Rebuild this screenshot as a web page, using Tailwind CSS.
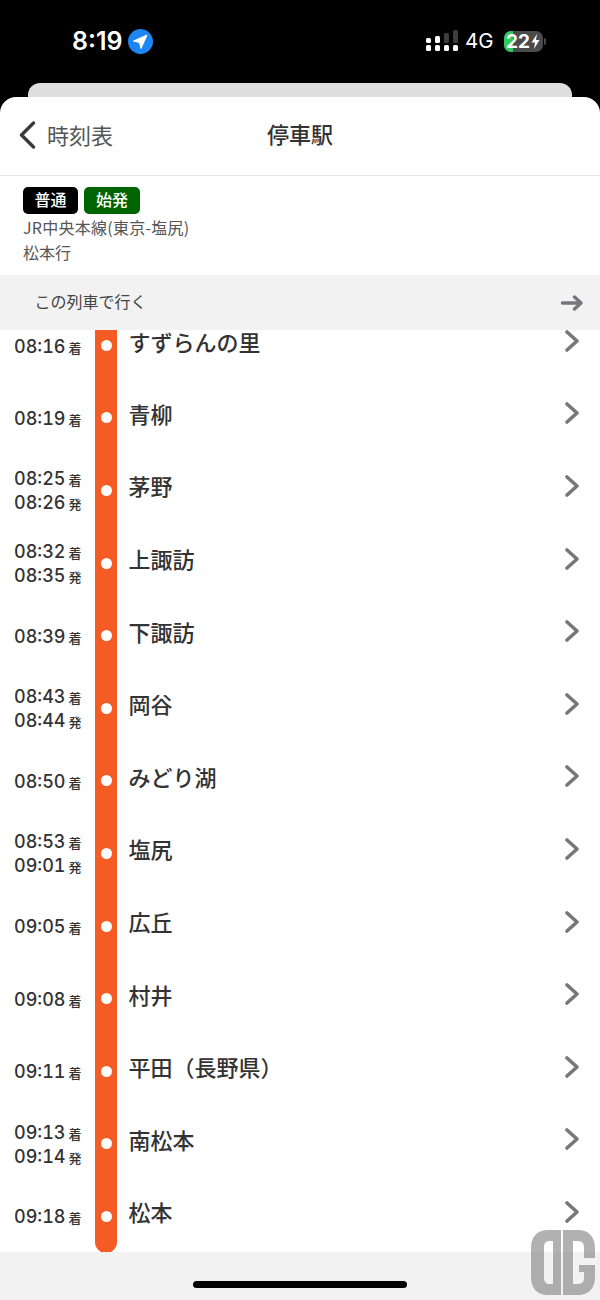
<!DOCTYPE html>
<html lang="ja">
<head>
    <meta charset="UTF-8">
    <meta name="viewport" content="width=device-width, initial-scale=1.0">
    <title>停車駅</title>
    <script src="https://cdn.jsdelivr.net/npm/@tailwindcss/browser@4"></script>
</head>
<body class="bg-black font-['Noto_Sans_CJK_JP','Noto_Sans',sans-serif]">
<svg class="hidden">
    <symbol id="chev" viewBox="0 0 14 22"><path d="M2 2 L12 11 L2 20" fill="none" stroke="#77777b" stroke-width="3.6" stroke-linecap="round" stroke-linejoin="round"/></symbol>
</svg>
<div class="relative w-[600px] h-[1300px] overflow-hidden flex flex-col">

    <!-- status bar -->
    <div class="h-[83px] shrink-0 flex items-start text-white font-['Inter',sans-serif]">
        <div class="flex items-center h-[24px] mt-[29px] ml-[72px]">
            <span class="text-[25px] font-semibold leading-none w-[56px]">8:19</span>
            <svg width="25" height="25" viewBox="0 0 25 25"><circle cx="12.5" cy="12.5" r="12.5" fill="#1c86f2"/><path d="M19 6 L5.5 12 L11.5 13.5 L13 19.5 Z" fill="#fff" stroke="#fff" stroke-width="1" stroke-linejoin="round"/></svg>
        </div>
        <div class="flex items-center h-[24px] mt-[29px] ml-auto mr-[54px]">
            <svg width="32" height="22" viewBox="0 0 32 22"><g fill="#fff"><rect x="0" y="15" width="5" height="6" rx="1.5"/><rect x="9" y="15" width="5" height="6" rx="1.5"/><rect x="18" y="15" width="5" height="6" rx="1.5"/><rect x="27" y="15" width="5" height="6" rx="1.5"/><rect x="0" y="8" width="5" height="5" rx="1.5"/><rect x="9" y="6" width="5" height="7" rx="1.5"/></g><g fill="#3d3d3d"><rect x="18" y="3" width="5" height="10" rx="1.5"/><rect x="27" y="0" width="5" height="13" rx="1.5"/></g></svg>
            <span class="text-[20.5px] leading-none ml-[7px] w-[39px]">4G</span>
            <div class="relative w-[39px] h-[21px] rounded-[7px] overflow-hidden bg-[#4b4b4b] flex items-center pl-[2px]">
                <div class="absolute left-0 top-0 bottom-0 w-[9px] bg-[#34c759]"></div>
                <span class="relative text-[19px] font-bold leading-none">22</span>
                <svg class="relative ml-[1px]" width="9" height="15" viewBox="0 0 9 15"><path d="M6 0 L0.5 8.5 H4 L3 15 L8.5 6 H5 Z" fill="#fff"/></svg>
            </div>
            <div class="w-[2px] h-[7px] ml-[1px] rounded-r-sm bg-[#4b4b4b]"></div>
        </div>
    </div>
    <div class="h-[14px] shrink-0 mx-[28px] rounded-t-xl bg-[#dfdfdf]"></div>

    <!-- sheet -->
    <div class="flex-1 min-h-0 flex flex-col bg-white rounded-t-2xl overflow-hidden">
        <div class="relative h-[79px] shrink-0 flex items-center justify-center border-b border-[#e6e6e6]">
            <div class="absolute left-[19px] top-[24px] flex items-center">
                <svg width="17" height="28" viewBox="0 0 17 28"><path d="M14.5 2 L2.5 14 L14.5 26" fill="none" stroke="#3a3a3a" stroke-width="3.4" stroke-linecap="round" stroke-linejoin="round"/></svg>
                <span class="ml-[11px] -mt-[3px] text-[22px] leading-none text-[#555]">時刻表</span>
            </div>
            <span class="text-[22px] font-medium leading-none text-[#333] -mt-[6px]">停車駅</span>
        </div>

        <div class="h-[99px] shrink-0 px-[23px] pt-[11px]">
            <div class="flex gap-[6px]">
                <span class="w-[55px] h-[27px] rounded-[5px] bg-black text-white text-[16px] font-medium leading-[25px] text-center">普通</span>
                <span class="w-[56px] h-[27px] rounded-[5px] bg-[#006400] text-white text-[16px] font-medium leading-[25px] text-center">始発</span>
            </div>
            <p class="mt-[1px] text-[16px] leading-[25px] tracking-[0.25px] text-[#555]">JR中央本線(東京-塩尻)</p>
            <p class="text-[16px] leading-[25px] text-[#555]">松本行</p>
        </div>

        <div class="h-[55px] shrink-0 bg-[#f2f2f2] flex items-center pl-[34.5px] pr-[17px] justify-between">
            <span class="-mt-[4px] text-[16px] leading-none text-[#444]">この列車で行く</span>
            <svg width="22" height="16" viewBox="0 0 22 16"><path d="M1.5 8 H20 M13.5 2 L20 8 L13.5 14" fill="none" stroke="#77777b" stroke-width="3.4" stroke-linecap="round" stroke-linejoin="round"/></svg>
        </div>

        <!-- stops: the list is scrolled, so the first row shows only its lower part -->
        <div class="h-[922px] shrink-0 text-[#333]">
            <div class="h-[51.6px] flex items-start">
                <div class="w-[95px] pl-[14px] pt-[5px]"><p class="h-[24px] leading-[24px] text-[18px] font-medium tabular-nums font-['Inter',sans-serif]">08:16<span class="ml-[3px] text-[13px] font-medium font-['Noto_Sans_CJK_JP']">着</span></p></div>
                <div class="w-[22px] h-full bg-[#f45c23] flex justify-center pt-[10px]"><i class="block w-[11px] h-[11px] rounded-full bg-white"></i></div>
                <p class="flex-1 pl-[11.5px] -mt-[1px] text-[22px] font-medium leading-[24px]">すずらんの里</p>
                <svg class="mr-[21px]" width="14" height="22"><use href="#chev"/></svg>
            </div>
            <div class="h-[72.6px] flex">
                <div class="w-[95px] pl-[14px] pt-[2px] flex flex-col justify-center"><p class="h-[24px] leading-[24px] text-[18px] font-medium tabular-nums font-['Inter',sans-serif]">08:19<span class="ml-[3px] text-[13px] font-medium font-['Noto_Sans_CJK_JP']">着</span></p></div>
                <div class="w-[22px] bg-[#f45c23] flex items-center justify-center"><i class="block w-[11px] h-[11px] rounded-full bg-white"></i></div>
                <p class="flex-1 pl-[11.5px] self-center -mt-[10px] text-[22px] font-medium leading-[24px]">青柳</p>
                <svg class="self-center -mt-[9px] mr-[21px]" width="14" height="22"><use href="#chev"/></svg>
            </div>
            <div class="h-[72.6px] flex">
                <div class="w-[95px] pl-[14px] pt-[2px] flex flex-col justify-center"><p class="h-[24px] leading-[24px] text-[18px] font-medium tabular-nums font-['Inter',sans-serif]">08:25<span class="ml-[3px] text-[13px] font-medium font-['Noto_Sans_CJK_JP']">着</span></p><p class="h-[24px] leading-[24px] text-[18px] font-medium tabular-nums font-['Inter',sans-serif]">08:26<span class="ml-[3px] text-[13px] font-medium font-['Noto_Sans_CJK_JP']">発</span></p></div>
                <div class="w-[22px] bg-[#f45c23] flex items-center justify-center"><i class="block w-[11px] h-[11px] rounded-full bg-white"></i></div>
                <p class="flex-1 pl-[11.5px] self-center -mt-[10px] text-[22px] font-medium leading-[24px]">茅野</p>
                <svg class="self-center -mt-[9px] mr-[21px]" width="14" height="22"><use href="#chev"/></svg>
            </div>
            <div class="h-[72.6px] flex">
                <div class="w-[95px] pl-[14px] pt-[2px] flex flex-col justify-center"><p class="h-[24px] leading-[24px] text-[18px] font-medium tabular-nums font-['Inter',sans-serif]">08:32<span class="ml-[3px] text-[13px] font-medium font-['Noto_Sans_CJK_JP']">着</span></p><p class="h-[24px] leading-[24px] text-[18px] font-medium tabular-nums font-['Inter',sans-serif]">08:35<span class="ml-[3px] text-[13px] font-medium font-['Noto_Sans_CJK_JP']">発</span></p></div>
                <div class="w-[22px] bg-[#f45c23] flex items-center justify-center"><i class="block w-[11px] h-[11px] rounded-full bg-white"></i></div>
                <p class="flex-1 pl-[11.5px] self-center -mt-[10px] text-[22px] font-medium leading-[24px]">上諏訪</p>
                <svg class="self-center -mt-[9px] mr-[21px]" width="14" height="22"><use href="#chev"/></svg>
            </div>
            <div class="h-[72.6px] flex">
                <div class="w-[95px] pl-[14px] pt-[2px] flex flex-col justify-center"><p class="h-[24px] leading-[24px] text-[18px] font-medium tabular-nums font-['Inter',sans-serif]">08:39<span class="ml-[3px] text-[13px] font-medium font-['Noto_Sans_CJK_JP']">着</span></p></div>
                <div class="w-[22px] bg-[#f45c23] flex items-center justify-center"><i class="block w-[11px] h-[11px] rounded-full bg-white"></i></div>
                <p class="flex-1 pl-[11.5px] self-center -mt-[10px] text-[22px] font-medium leading-[24px]">下諏訪</p>
                <svg class="self-center -mt-[9px] mr-[21px]" width="14" height="22"><use href="#chev"/></svg>
            </div>
            <div class="h-[72.6px] flex">
                <div class="w-[95px] pl-[14px] pt-[2px] flex flex-col justify-center"><p class="h-[24px] leading-[24px] text-[18px] font-medium tabular-nums font-['Inter',sans-serif]">08:43<span class="ml-[3px] text-[13px] font-medium font-['Noto_Sans_CJK_JP']">着</span></p><p class="h-[24px] leading-[24px] text-[18px] font-medium tabular-nums font-['Inter',sans-serif]">08:44<span class="ml-[3px] text-[13px] font-medium font-['Noto_Sans_CJK_JP']">発</span></p></div>
                <div class="w-[22px] bg-[#f45c23] flex items-center justify-center"><i class="block w-[11px] h-[11px] rounded-full bg-white"></i></div>
                <p class="flex-1 pl-[11.5px] self-center -mt-[10px] text-[22px] font-medium leading-[24px]">岡谷</p>
                <svg class="self-center -mt-[9px] mr-[21px]" width="14" height="22"><use href="#chev"/></svg>
            </div>
            <div class="h-[72.6px] flex">
                <div class="w-[95px] pl-[14px] pt-[2px] flex flex-col justify-center"><p class="h-[24px] leading-[24px] text-[18px] font-medium tabular-nums font-['Inter',sans-serif]">08:50<span class="ml-[3px] text-[13px] font-medium font-['Noto_Sans_CJK_JP']">着</span></p></div>
                <div class="w-[22px] bg-[#f45c23] flex items-center justify-center"><i class="block w-[11px] h-[11px] rounded-full bg-white"></i></div>
                <p class="flex-1 pl-[11.5px] self-center -mt-[10px] text-[22px] font-medium leading-[24px]">みどり湖</p>
                <svg class="self-center -mt-[9px] mr-[21px]" width="14" height="22"><use href="#chev"/></svg>
            </div>
            <div class="h-[72.6px] flex">
                <div class="w-[95px] pl-[14px] pt-[2px] flex flex-col justify-center"><p class="h-[24px] leading-[24px] text-[18px] font-medium tabular-nums font-['Inter',sans-serif]">08:53<span class="ml-[3px] text-[13px] font-medium font-['Noto_Sans_CJK_JP']">着</span></p><p class="h-[24px] leading-[24px] text-[18px] font-medium tabular-nums font-['Inter',sans-serif]">09:01<span class="ml-[3px] text-[13px] font-medium font-['Noto_Sans_CJK_JP']">発</span></p></div>
                <div class="w-[22px] bg-[#f45c23] flex items-center justify-center"><i class="block w-[11px] h-[11px] rounded-full bg-white"></i></div>
                <p class="flex-1 pl-[11.5px] self-center -mt-[10px] text-[22px] font-medium leading-[24px]">塩尻</p>
                <svg class="self-center -mt-[9px] mr-[21px]" width="14" height="22"><use href="#chev"/></svg>
            </div>
            <div class="h-[72.6px] flex">
                <div class="w-[95px] pl-[14px] pt-[2px] flex flex-col justify-center"><p class="h-[24px] leading-[24px] text-[18px] font-medium tabular-nums font-['Inter',sans-serif]">09:05<span class="ml-[3px] text-[13px] font-medium font-['Noto_Sans_CJK_JP']">着</span></p></div>
                <div class="w-[22px] bg-[#f45c23] flex items-center justify-center"><i class="block w-[11px] h-[11px] rounded-full bg-white"></i></div>
                <p class="flex-1 pl-[11.5px] self-center -mt-[10px] text-[22px] font-medium leading-[24px]">広丘</p>
                <svg class="self-center -mt-[9px] mr-[21px]" width="14" height="22"><use href="#chev"/></svg>
            </div>
            <div class="h-[72.6px] flex">
                <div class="w-[95px] pl-[14px] pt-[2px] flex flex-col justify-center"><p class="h-[24px] leading-[24px] text-[18px] font-medium tabular-nums font-['Inter',sans-serif]">09:08<span class="ml-[3px] text-[13px] font-medium font-['Noto_Sans_CJK_JP']">着</span></p></div>
                <div class="w-[22px] bg-[#f45c23] flex items-center justify-center"><i class="block w-[11px] h-[11px] rounded-full bg-white"></i></div>
                <p class="flex-1 pl-[11.5px] self-center -mt-[10px] text-[22px] font-medium leading-[24px]">村井</p>
                <svg class="self-center -mt-[9px] mr-[21px]" width="14" height="22"><use href="#chev"/></svg>
            </div>
            <div class="h-[72.6px] flex">
                <div class="w-[95px] pl-[14px] pt-[2px] flex flex-col justify-center"><p class="h-[24px] leading-[24px] text-[18px] font-medium tabular-nums font-['Inter',sans-serif]">09:11<span class="ml-[3px] text-[13px] font-medium font-['Noto_Sans_CJK_JP']">着</span></p></div>
                <div class="w-[22px] bg-[#f45c23] flex items-center justify-center"><i class="block w-[11px] h-[11px] rounded-full bg-white"></i></div>
                <p class="flex-1 pl-[11.5px] self-center -mt-[10px] text-[22px] font-medium leading-[24px]">平田（長野県）</p>
                <svg class="self-center -mt-[9px] mr-[21px]" width="14" height="22"><use href="#chev"/></svg>
            </div>
            <div class="h-[72.6px] flex">
                <div class="w-[95px] pl-[14px] pt-[2px] flex flex-col justify-center"><p class="h-[24px] leading-[24px] text-[18px] font-medium tabular-nums font-['Inter',sans-serif]">09:13<span class="ml-[3px] text-[13px] font-medium font-['Noto_Sans_CJK_JP']">着</span></p><p class="h-[24px] leading-[24px] text-[18px] font-medium tabular-nums font-['Inter',sans-serif]">09:14<span class="ml-[3px] text-[13px] font-medium font-['Noto_Sans_CJK_JP']">発</span></p></div>
                <div class="w-[22px] bg-[#f45c23] flex items-center justify-center"><i class="block w-[11px] h-[11px] rounded-full bg-white"></i></div>
                <p class="flex-1 pl-[11.5px] self-center -mt-[10px] text-[22px] font-medium leading-[24px]">南松本</p>
                <svg class="self-center -mt-[9px] mr-[21px]" width="14" height="22"><use href="#chev"/></svg>
            </div>
            <div class="h-[72.6px] flex">
                <div class="w-[95px] pl-[14px] pt-[2px] flex flex-col justify-center"><p class="h-[24px] leading-[24px] text-[18px] font-medium tabular-nums font-['Inter',sans-serif]">09:18<span class="ml-[3px] text-[13px] font-medium font-['Noto_Sans_CJK_JP']">着</span></p></div>
                <div class="w-[22px] bg-[#f45c23] rounded-b-[11px] flex items-center justify-center"><i class="block w-[11px] h-[11px] rounded-full bg-white"></i></div>
                <p class="flex-1 pl-[11.5px] self-center -mt-[10px] text-[22px] font-medium leading-[24px]">松本</p>
                <svg class="self-center -mt-[9px] mr-[21px]" width="14" height="22"><use href="#chev"/></svg>
            </div>
        </div>

        <div class="flex-1 bg-[#f2f2f2] flex justify-center pt-[29px]">
            <div class="w-[214px] h-[7px] rounded-full bg-black"></div>
        </div>
    </div>

    <!-- watermark -->
    <svg class="absolute left-[530px] top-[1230px]" width="66" height="66" viewBox="0 0 66 66">
        <path d="M31 0 H18 C7 0 1 7 1 18 V47 C1 58 7 65 18 65 H31 Z M23 11 V54 H20 C16 54 14 52 14 48 V17 C14 13 16 11 20 11 Z" fill="#888" fill-opacity="0.66" fill-rule="evenodd"/>
        <path d="M33 0 H48 C59 0 65 7 65 18 V28 H54 V17 C54 13 52 11 47 11 H43 V54 H47 C52 54 54 52 54 48 V42 H49 V35 H65 V47 C65 58 59 65 48 65 H33 Z" fill="#888" fill-opacity="0.66"/>
    </svg>
</div>
</body>
</html>
